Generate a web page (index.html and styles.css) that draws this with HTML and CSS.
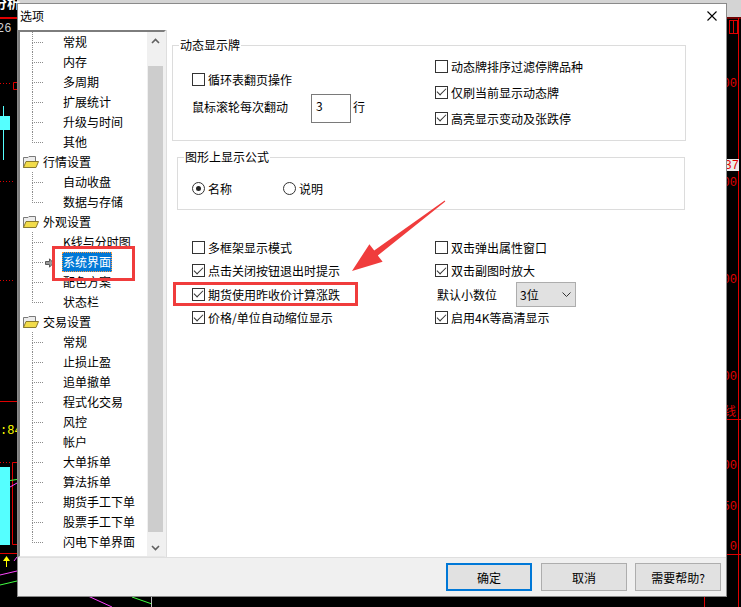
FILE: index.html
```html
<!DOCTYPE html>
<html lang="zh-CN">
<head>
<meta charset="utf-8">
<title>选项</title>
<link rel="stylesheet" href="styles.css">
</head>
<body>
<svg class="chart" width="741" height="607" viewBox="0 0 741 607">
  <rect width="741" height="607" fill="#000"/>
  <rect x="17" y="0" width="724" height="17" fill="#d4d4d4"/>
  <text x="-6" y="8" class="t-bold" fill="#fff">分析</text>
  <rect x="0" y="17" width="17" height="2" fill="#e00000"/>
  <text x="-3" y="32" class="t-mono" fill="#d0d0d0">26</text>
  <line x1="0" y1="83.5" x2="12" y2="83.5" stroke="#e00000" stroke-dasharray="1 2"/>
  <path d="M17 82.5 H13.5 V89.5 H17" fill="none" stroke="#e00000"/>
  <line x1="3.5" y1="106" x2="3.5" y2="160" stroke="#55ffff"/>
  <rect x="0" y="116" width="10" height="14" fill="#55ffff"/>
  <line x1="0" y1="181.5" x2="14" y2="181.5" stroke="#e00000" stroke-dasharray="1 2"/>
  <line x1="0" y1="280.5" x2="14" y2="280.5" stroke="#e00000" stroke-dasharray="1 2"/>
  <line x1="0" y1="401.5" x2="17" y2="401.5" stroke="#e00000"/>
  <text x="0" y="434" class="t-mono" fill="#ffff00">:84</text>
  <line x1="0" y1="462.5" x2="12" y2="462.5" stroke="#e00000" stroke-dasharray="1 2"/>
  <rect x="0" y="467" width="10" height="78" fill="#55ffff"/>
  <path d="M17 462.5 H12.5 V544.5 H17" fill="none" stroke="#e00000"/>
  <line x1="10" y1="480.5" x2="17" y2="479.5" stroke="#40ff40"/>
  <line x1="10" y1="487" x2="17" y2="483" stroke="#ff40ff"/>
  <line x1="0" y1="553.5" x2="17" y2="553.5" stroke="#e00000"/>
  <line x1="6.5" y1="559" x2="6.5" y2="567" stroke="#ffff00"/>
  <polygon points="3,561 6.5,556 10,561" fill="#ffff00"/>
  <line x1="14" y1="561" x2="17" y2="557" stroke="#ff40ff"/>
  <line x1="0" y1="575" x2="17" y2="571" stroke="#ff40ff"/>
  <line x1="0" y1="585" x2="17" y2="581" stroke="#40ff40"/>
  <line x1="88" y1="596" x2="112" y2="607" stroke="#ff40ff"/>
  <line x1="132" y1="597" x2="152" y2="604" stroke="#40ff40"/>
  <line x1="151.5" y1="597" x2="151.5" y2="607" stroke="#c0c0c0"/>
  <line x1="704.5" y1="597" x2="704.5" y2="607" stroke="#e00000"/>
  <line x1="727" y1="18" x2="741" y2="18" stroke="#e00000"/>
  <rect x="729.5" y="20.5" width="8" height="13" fill="none" stroke="#e00000"/>
  <line x1="733.5" y1="21" x2="733.5" y2="33" stroke="#e00000"/>
  <line x1="738.5" y1="18" x2="738.5" y2="607" stroke="#e00000"/>
  <text x="737" y="87" class="t-mono" fill="#e00000" text-anchor="end">3000</text>
  <rect x="725" y="159" width="14" height="12" fill="#ececec"/>
  <text x="739" y="169" class="t-mono" fill="#e00000" text-anchor="end">37</text>
  <text x="737" y="186" class="t-mono" fill="#e00000" text-anchor="end">2000</text>
  <text x="737" y="283" class="t-mono" fill="#e00000" text-anchor="end">1000</text>
  <text x="737" y="380" class="t-mono" fill="#e00000" text-anchor="end">3000</text>
  <text x="724" y="416" class="t-cjk" fill="#e00000">线</text>
  <line x1="727" y1="419.5" x2="741" y2="419.5" stroke="#e00000"/>
  <text x="737" y="469" class="t-mono" fill="#e00000" text-anchor="end">100</text>
  <text x="737" y="510" class="t-mono" fill="#e00000" text-anchor="end">50</text>
  <text x="737" y="550" class="t-mono" fill="#e00000" text-anchor="end">0</text>
  <line x1="727" y1="554.5" x2="741" y2="554.5" stroke="#e00000"/>
</svg>

<div class="dialog">
  <div class="titlebar">
    <span class="title">选项</span>
    <svg class="close" width="10" height="10" viewBox="0 0 10 10"><path d="M0.5 0.5 L9.5 9.5 M9.5 0.5 L0.5 9.5" stroke="#000" stroke-width="1.1"/></svg>
  </div>
  <div class="main">
    <div class="tree">
      <div class="tree-list">
        <div class="node child"><i class="ln"></i><span class="sp"></span><span class="lbl">常规</span></div>
        <div class="node child"><i class="ln"></i><span class="sp"></span><span class="lbl">内存</span></div>
        <div class="node child"><i class="ln"></i><span class="sp"></span><span class="lbl">多周期</span></div>
        <div class="node child"><i class="ln"></i><span class="sp"></span><span class="lbl">扩展统计</span></div>
        <div class="node child"><i class="ln"></i><span class="sp"></span><span class="lbl">升级与时间</span></div>
        <div class="node child last"><i class="ln"></i><span class="sp"></span><span class="lbl">其他</span></div>
        <div class="node parent"><span class="fold"><svg width="16" height="13" viewBox="0 0 16 13"><path d="M0.5 1.5 H5 L6 0.5 H12.5 V11.5 H0.5 Z" fill="#ececec" stroke="#7a7a7a"/><path d="M0.5 11.5 L3 5.5 H15.5 L13 11.5 Z" fill="#f2dc4a" stroke="#8a7a30"/></svg></span><span class="lbl">行情设置</span></div>
        <div class="node child"><i class="ln"></i><span class="sp"></span><span class="lbl">自动收盘</span></div>
        <div class="node child last"><i class="ln"></i><span class="sp"></span><span class="lbl">数据与存储</span></div>
        <div class="node parent"><span class="fold"><svg width="16" height="13" viewBox="0 0 16 13"><path d="M0.5 1.5 H5 L6 0.5 H12.5 V11.5 H0.5 Z" fill="#ececec" stroke="#7a7a7a"/><path d="M0.5 11.5 L3 5.5 H15.5 L13 11.5 Z" fill="#f2dc4a" stroke="#8a7a30"/></svg></span><span class="lbl">外观设置</span></div>
        <div class="node child"><i class="ln"></i><span class="sp"></span><span class="lbl">K线与分时图</span></div>
        <div class="node child"><i class="ln"></i><span class="sp"><svg class="cur" width="9" height="10" viewBox="0 0 9 10"><path d="M0.5 3.5 H4.5 V0.8 L8.5 5 L4.5 9.2 V6.5 H0.5 Z" fill="#9a9a9a" stroke="#5a5a5a"/></svg></span><span class="lbl sel">系统界面</span></div>
        <div class="node child"><i class="ln"></i><span class="sp"></span><span class="lbl">配色方案</span></div>
        <div class="node child last"><i class="ln"></i><span class="sp"></span><span class="lbl">状态栏</span></div>
        <div class="node parent"><span class="fold"><svg width="16" height="13" viewBox="0 0 16 13"><path d="M0.5 1.5 H5 L6 0.5 H12.5 V11.5 H0.5 Z" fill="#ececec" stroke="#7a7a7a"/><path d="M0.5 11.5 L3 5.5 H15.5 L13 11.5 Z" fill="#f2dc4a" stroke="#8a7a30"/></svg></span><span class="lbl">交易设置</span></div>
        <div class="node child"><i class="ln"></i><span class="sp"></span><span class="lbl">常规</span></div>
        <div class="node child"><i class="ln"></i><span class="sp"></span><span class="lbl">止损止盈</span></div>
        <div class="node child"><i class="ln"></i><span class="sp"></span><span class="lbl">追单撤单</span></div>
        <div class="node child"><i class="ln"></i><span class="sp"></span><span class="lbl">程式化交易</span></div>
        <div class="node child"><i class="ln"></i><span class="sp"></span><span class="lbl">风控</span></div>
        <div class="node child"><i class="ln"></i><span class="sp"></span><span class="lbl">帐户</span></div>
        <div class="node child"><i class="ln"></i><span class="sp"></span><span class="lbl">大单拆单</span></div>
        <div class="node child"><i class="ln"></i><span class="sp"></span><span class="lbl">算法拆单</span></div>
        <div class="node child"><i class="ln"></i><span class="sp"></span><span class="lbl">期货手工下单</span></div>
        <div class="node child"><i class="ln"></i><span class="sp"></span><span class="lbl">股票手工下单</span></div>
        <div class="node child last"><i class="ln"></i><span class="sp"></span><span class="lbl">闪电下单界面</span></div>
      </div>
      <div class="vscroll">
        <div class="sb-btn"><svg width="9" height="6" viewBox="0 0 9 6"><path d="M1 5 L4.5 1.5 L8 5" fill="none" stroke="#606060" stroke-width="1.6"/></svg></div>
        <div class="sb-thumb"></div>
        <div class="sb-space"></div>
        <div class="sb-btn"><svg width="9" height="6" viewBox="0 0 9 6"><path d="M1 1 L4.5 4.5 L8 1" fill="none" stroke="#606060" stroke-width="1.6"/></svg></div>
      </div>
    </div>

    <div class="panel">
      <div class="group g1">
        <span class="legend">动态显示牌</span>
        <div class="g1-body">
          <div class="col-left">
            <div class="row"><span class="cb"></span><span>循环表翻页操作</span></div>
            <div class="row row-spin"><span class="spin-label">鼠标滚轮每次翻动</span><span class="spin">3</span><span class="spin-unit">行</span></div>
          </div>
          <div class="col-right">
            <div class="row"><span class="cb"></span><span>动态牌排序过滤停牌品种</span></div>
            <div class="row"><span class="cb on"></span><span>仅刷当前显示动态牌</span></div>
            <div class="row"><span class="cb on"></span><span>高亮显示变动及张跌停</span></div>
          </div>
        </div>
      </div>

      <div class="group g2">
        <span class="legend">图形上显示公式</span>
        <div class="g2-body">
          <div class="row"><span class="rb on"></span><span>名称</span></div>
          <div class="row"><span class="rb"></span><span>说明</span></div>
        </div>
      </div>

      <div class="opts">
        <div class="row"><span class="cb"></span><span>多框架显示模式</span></div>
        <div class="row"><span class="cb"></span><span>双击弹出属性窗口</span></div>
        <div class="row"><span class="cb on"></span><span>点击关闭按钮退出时提示</span></div>
        <div class="row"><span class="cb on"></span><span>双击副图时放大</span></div>
        <div class="row"><span class="cb on"></span><span>期货使用昨收价计算涨跌</span></div>
        <div class="row row-sel"><span class="sel-label">默认小数位</span><span class="select"><span>3位</span><svg width="9" height="5" viewBox="0 0 9 5"><path d="M0.5 0.5 L4.5 4.5 L8.5 0.5" fill="none" stroke="#333"/></svg></span></div>
        <div class="row"><span class="cb on"></span><span>价格/单位自动缩位显示</span></div>
        <div class="row"><span class="cb on"></span><span>启用4K等高清显示</span></div>
      </div>
    </div>
  </div>
  <div class="footer">
    <button class="btn default">确定</button>
    <button class="btn cancel">取消</button>
    <button class="btn">需要帮助?</button>
  </div>
</div>

<svg class="annot" width="741" height="607" viewBox="0 0 741 607">
  <rect x="53.5" y="247.5" width="80" height="32" fill="none" stroke="#f03c3c" stroke-width="3"/>
  <rect x="174.5" y="283.5" width="182" height="21" fill="none" stroke="#f03c3c" stroke-width="3"/>
  <polygon points="352,271 382.6,261.8 377.8,255.4 445.3,201.4 444.7,200.6 374.2,250.6 369.4,244.2" fill="#f03c3c"/>
</svg>
</body>
</html>
```

FILE: styles.css
```css
* {
  box-sizing: border-box;
}

html,
body {
  margin: 0;
  padding: 0;
}

body {
  width: 741px;
  height: 607px;
  overflow: hidden;
  position: relative;
  background: #000;
  font-family: "Noto Sans CJK SC", "Noto Sans", sans-serif;
  font-size: 12px;
  color: #000;
}

.chart {
  position: absolute;
  left: 0;
  top: 0;
}

.t-bold {
  font-family: "Noto Sans CJK SC", sans-serif;
  font-size: 13px;
  font-weight: bold;
}

.t-mono {
  font-family: "Liberation Mono", monospace;
  font-size: 12px;
}

.t-cjk {
  font-family: "Noto Sans CJK SC", sans-serif;
  font-size: 12px;
}

.annot {
  position: absolute;
  left: 0;
  top: 0;
  pointer-events: none;
}

/* dialog window */
.dialog {
  position: absolute;
  left: 17px;
  top: 3px;
  width: 710px;
  height: 594px;
  border: 1px solid #8a8a8a;
  background: #fff;
  display: flex;
  flex-direction: column;
}

.titlebar {
  height: 26px;
  flex: none;
  display: flex;
  justify-content: space-between;
  align-items: flex-start;
  padding-left: 2px;
}

.title {
  line-height: 24px;
}

.close {
  margin: 7px 9px 0 0;
}

.main {
  height: 527px;
  flex: none;
  display: flex;
}

/* tree */
.tree {
  width: 148px;
  flex: none;
  display: flex;
  border-style: solid;
  border-width: 2px 2px 1px 2px;
  border-color: #7d7d7d #f0f0f0 #e6e6e6 #7d7d7d;
}

.tree-list {
  flex: 1;
  overflow: hidden;
}

.node {
  height: 20px;
  display: flex;
  align-items: center;
  white-space: nowrap;
}

.ln {
  width: 11px;
  height: 20px;
  margin-left: 12px;
  flex: none;
  display: flex;
  flex-direction: column;
}

.ln::before {
  content: "";
  height: 10px;
  border-left: 1px dotted #8c8c8c;
  border-bottom: 1px dotted #8c8c8c;
}

.ln::after {
  content: "";
  flex: 1;
  border-left: 1px dotted #8c8c8c;
}

.last .ln::after {
  border-left-color: transparent;
}

.sp {
  width: 19px;
  height: 20px;
  flex: none;
  display: flex;
  align-items: center;
}

.cur {
  margin-left: 2px;
  margin-top: 1px;
}

.fold {
  width: 16px;
  height: 13px;
  margin-left: 3px;
  margin-right: 3px;
  flex: none;
  display: flex;
}

.lbl {
  padding: 0 1px;
  line-height: 20px;
  height: 20px;
}

.lbl.sel {
  background: #0078d7;
  color: #fff;
  outline: 1px dotted #ff9a3c;
  outline-offset: -1px;
}

.vscroll {
  width: 17px;
  flex: none;
  background: #f0f0f0;
  display: flex;
  flex-direction: column;
}

.sb-btn {
  height: 17px;
  flex: none;
  display: flex;
  align-items: center;
  justify-content: center;
}

.sb-thumb {
  margin: 17px 1px 0;
  height: 466px;
  flex: none;
  background: #cdcdcd;
}

.sb-space {
  flex: 1;
}

/* right panel */
.panel {
  flex: 1;
  border-left: 1px solid #dedede;
  padding: 15px 0 0 5px;
  display: flex;
  flex-direction: column;
  align-items: flex-start;
}

.group {
  border: 1px solid #dcdcdc;
  display: flex;
  flex-direction: column;
  flex: none;
}

.legend {
  align-self: flex-start;
  margin: -9px 0 0 6px;
  padding: 0 1px;
  height: 16px;
  line-height: 16px;
  background: #fff;
}

.g1 {
  width: 514px;
  height: 96px;
}

.g1-body {
  display: flex;
  margin-left: 19px;
}

.col-left {
  width: 243px;
  flex: none;
  padding-top: 16px;
}

.col-right {
  padding-top: 3px;
  display: flex;
  flex-direction: column;
  gap: 6px;
}

.row {
  height: 20px;
  display: flex;
  align-items: center;
  gap: 3px;
  white-space: nowrap;
}

.row-spin {
  height: 29px;
  margin-top: 5px;
  gap: 0;
}

.spin-label,
.spin-unit {
  margin-bottom: 4px;
}

.spin {
  width: 40px;
  height: 29px;
  margin-left: 23px;
  margin-right: 2px;
  border: 1px solid #7a7a7a;
  padding: 3px 4px;
  line-height: 16px;
}

.cb {
  width: 13px;
  height: 13px;
  flex: none;
  border: 1px solid #333;
  background: #fff;
  display: flex;
  align-items: center;
  justify-content: center;
}

.cb.on::after {
  content: "";
  width: 8px;
  height: 4px;
  margin-top: -3px;
  border-left: 1px solid #333;
  border-bottom: 1px solid #333;
  transform: rotate(-45deg);
}

.rb {
  width: 13px;
  height: 13px;
  flex: none;
  border: 1px solid #333;
  border-radius: 50%;
  background: #fff;
  display: flex;
  align-items: center;
  justify-content: center;
}

.rb.on::after {
  content: "";
  width: 5px;
  height: 5px;
  border-radius: 50%;
  background: #222;
}

.g2 {
  width: 508px;
  height: 53px;
  margin-top: 16px;
  margin-left: 5px;
}

.g2-body {
  display: flex;
  gap: 51px;
  margin-left: 14px;
  padding-top: 13px;
}

.opts {
  margin-top: 25px;
  margin-left: 20px;
  display: grid;
  grid-template-columns: 243px auto;
  grid-template-rows: 24px 23px 24px 23px;
  align-items: center;
}

.row-sel {
  padding-left: 2px;
  gap: 0;
}

.select {
  width: 60px;
  height: 25px;
  margin-left: 19px;
  border: 1px solid #adadad;
  background: #e1e1e1;
  display: flex;
  align-items: center;
  justify-content: space-between;
  padding: 0 4px 0 3px;
}

/* footer */
.footer {
  height: 39px;
  flex: none;
  border-top: 1px solid #dfdfdf;
  background: #f0f0f0;
  display: flex;
  justify-content: flex-end;
  align-items: flex-start;
  padding: 5px 5px 0 0;
}

.btn {
  width: 86px;
  height: 28px;
  margin: 0 0 0 8px;
  padding: 0;
  border: 1px solid #adadad;
  background: #e1e1e1;
  font-family: "Noto Sans CJK SC", "Noto Sans", sans-serif;
  font-size: 12px;
  color: #000;
}

.btn.default {
  border: 2px solid #0078d7;
}

.btn.cancel {
  margin-left: 9px;
}
```
